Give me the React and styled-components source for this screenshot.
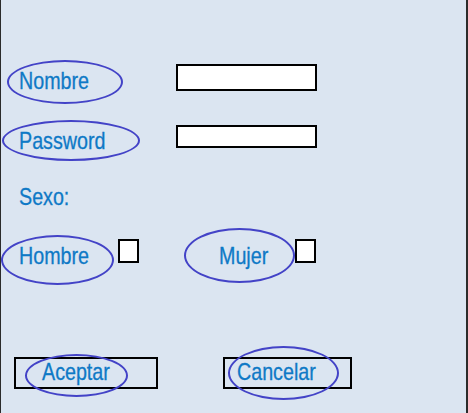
import React from "react";
import styled, { createGlobalStyle } from "styled-components";

const Global = createGlobalStyle`
  html, body { margin: 0; padding: 0; background: #ffffff; }
  body { font-family: "Liberation Sans", Arial, sans-serif; }
`;

const Panel = styled.div`
  box-sizing: border-box;
  width: 468px;
  height: 413px;
  background: #dbe5f1;
  border-left: 1px solid #2b2b2b;
  border-right: 2px solid #2b2b2b;
  display: flex;
  flex-direction: column;
  overflow: hidden;
`;

const Row = styled.div`
  display: flex;
  align-items: flex-start;
  margin-top: ${(p) => p.$mt}px;
  height: ${(p) => p.$h}px;
`;

const Text = styled.span`
  display: inline-block;
  font-family: "Liberation Sans", Arial, sans-serif;
  font-size: 24px;
  line-height: 24px;
  color: #0e79c6;
  -webkit-text-stroke: 0.3px #0e79c6;
  white-space: nowrap;
  transform: scaleX(0.82);
  transform-origin: left center;
`;

const Ring = styled.div`
  box-sizing: border-box;
  flex: none;
  width: ${(p) => p.$w}px;
  height: ${(p) => p.$h}px;
  margin-left: ${(p) => p.$ml || 0}px;
  margin-top: ${(p) => p.$mt || 0}px;
  border: 2.5px solid #4343c7;
  border-radius: 50%;
  padding-left: ${(p) => p.$pl}px;
  padding-top: ${(p) => p.$pt}px;
`;

const TextBox = styled.input`
  box-sizing: border-box;
  flex: none;
  width: 141px;
  height: ${(p) => p.$h}px;
  margin-left: ${(p) => p.$ml}px;
  margin-top: ${(p) => p.$mt}px;
  border: 2px solid #000;
  background: #fff;
  padding: 0;
  outline: none;
`;

const Box = styled.span`
  box-sizing: border-box;
  flex: none;
  width: 21px;
  height: 24px;
  margin-left: ${(p) => p.$ml}px;
  margin-top: ${(p) => p.$mt}px;
  border: 2px solid #000;
  background: #fff;
`;

const Caption = styled(Text)`
  align-self: flex-start;
  margin-left: ${(p) => p.$ml}px;
  margin-top: ${(p) => p.$mt}px;
`;

const Button = styled.button`
  position: relative;
  box-sizing: border-box;
  flex: none;
  width: ${(p) => p.$w}px;
  height: 32px;
  margin-left: ${(p) => p.$ml}px;
  border: 2px solid #000;
  background: transparent;
  padding: 0 0 0 ${(p) => p.$pl}px;
  display: flex;
  align-items: flex-start;
  cursor: pointer;
`;

const ButtonText = styled(Text)`
  margin-top: 1px;
`;

const ButtonRing = styled.span`
  position: absolute;
  box-sizing: border-box;
  left: ${(p) => p.$x}px;
  top: ${(p) => p.$y}px;
  width: ${(p) => p.$w}px;
  height: ${(p) => p.$h}px;
  border: 2.5px solid #4343c7;
  border-radius: 50%;
  pointer-events: none;
`;

export default function App() {
  return (
    <>
      <Global />
      <Panel>
        <Row $mt={60} $h={44}>
          <Ring $w={116} $h={44} $ml={6} $pl={10} $pt={7}>
            <Text>Nombre</Text>
          </Ring>
          <TextBox $h={27} $ml={53} $mt={4} />
        </Row>
        <Row $mt={16} $h={41}>
          <Ring $w={138} $h={41} $ml={1} $pl={15} $pt={7}>
            <Text>Password</Text>
          </Ring>
          <TextBox $h={23} $ml={36} $mt={5} type="password" />
        </Row>
        <Caption $ml={18} $mt={24}>Sexo:</Caption>
        <Row $mt={19} $h={57}>
          <Ring $w={113} $h={50} $ml={0} $mt={7} $pl={16} $pt={7}>
            <Text>Hombre</Text>
          </Ring>
          <Box $ml={4} $mt={11} />
          <Ring $w={111} $h={55} $ml={45} $pl={33} $pt={14}>
            <Text>Mujer</Text>
          </Ring>
          <Box $ml={0} $mt={11} />
        </Row>
        <Row $mt={72} $h={32}>
          <Button $w={144} $ml={13} $pl={26}>
            <ButtonText>Aceptar</ButtonText>
            <ButtonRing $x={9} $y={-5} $w={103} $h={43} />
          </Button>
          <Button $w={129} $ml={65} $pl={12}>
            <ButtonText>Cancelar</ButtonText>
            <ButtonRing $x={3} $y={-13} $w={111} $h={54} />
          </Button>
        </Row>
      </Panel>
    </>
  );
}
